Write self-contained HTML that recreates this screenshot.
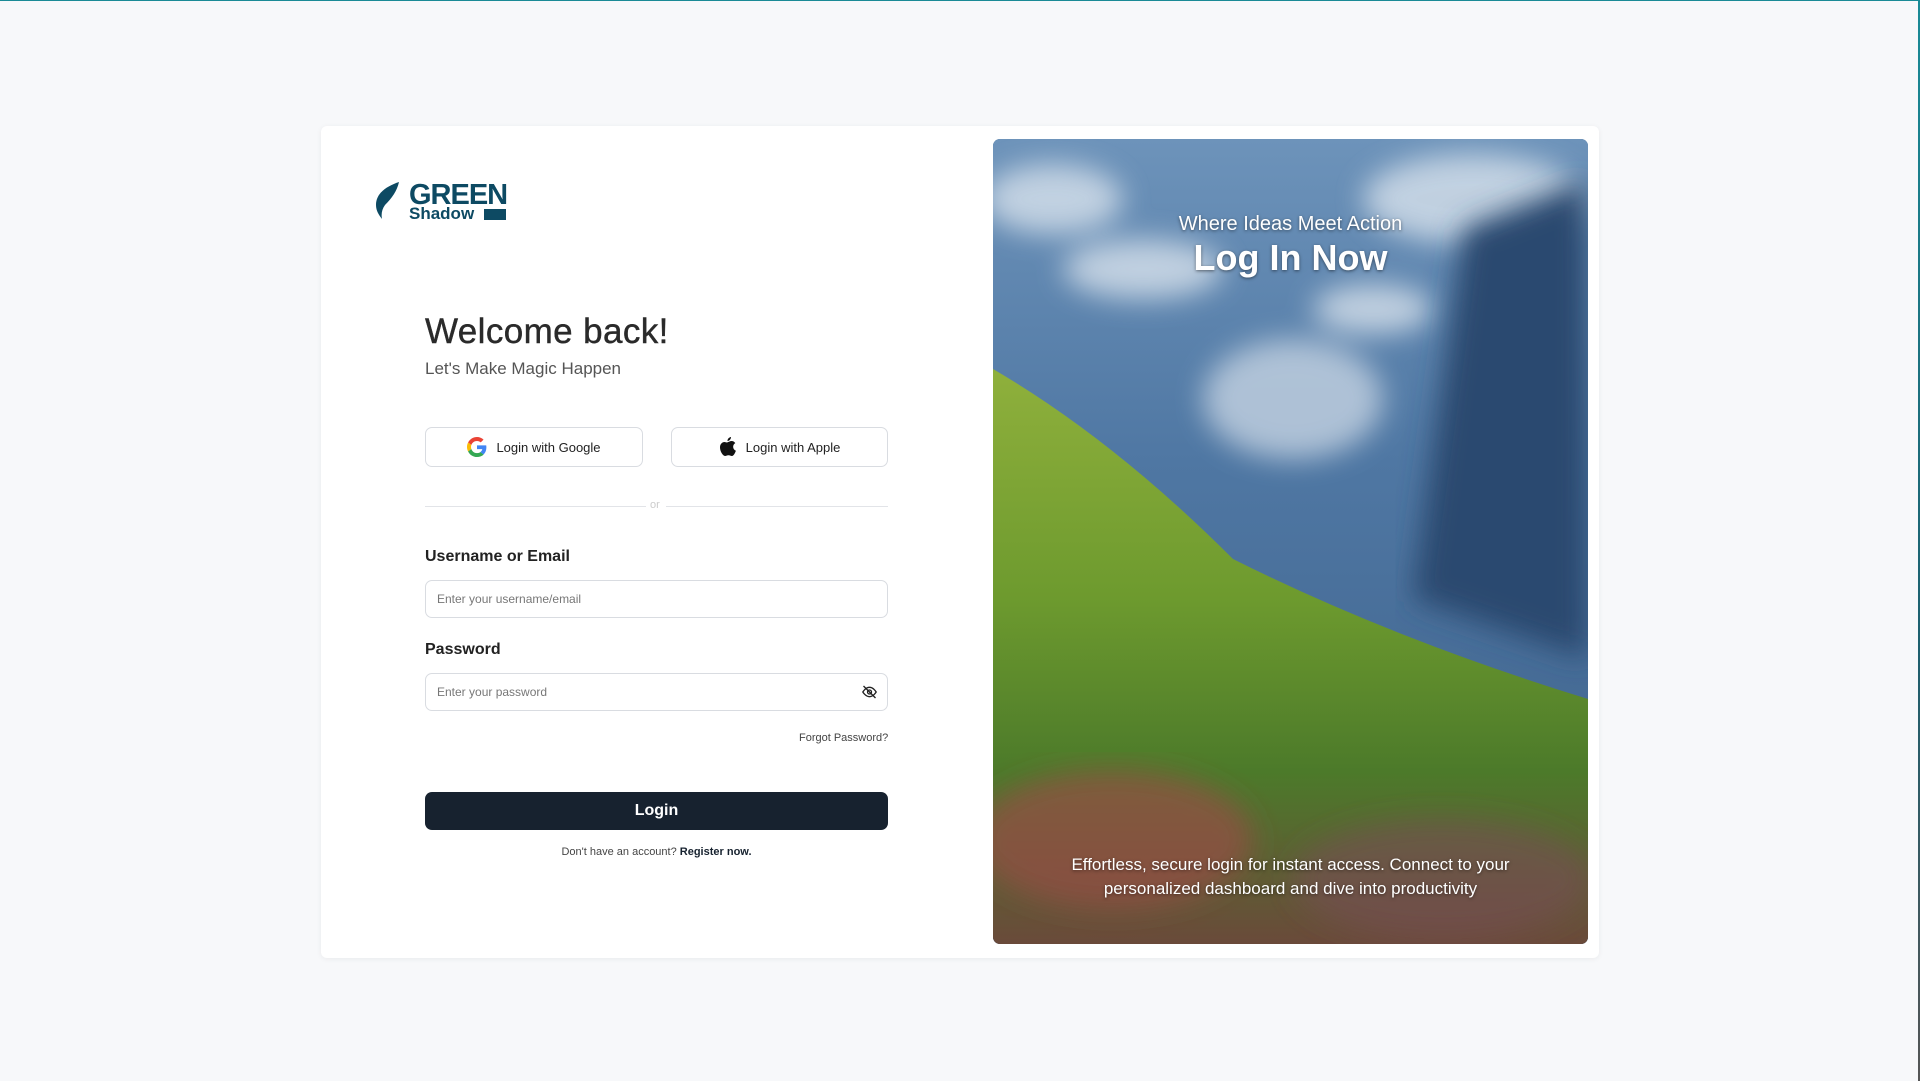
<!DOCTYPE html>
<html><head><meta charset="utf-8"><style>
*{box-sizing:border-box;margin:0;padding:0}
body{width:1920px;height:1080px;background:#f7f8fa;font-family:"Liberation Sans",sans-serif;position:relative;overflow:hidden;border-top:1px solid #1a8a96}
.edge{position:absolute;right:0;top:0;width:2px;height:1080px;background:linear-gradient(#1a8a96,#1d5f6e 60%,#555 100%)}
.card{position:absolute;left:321px;top:125px;width:1278px;height:832px;background:#fff;border-radius:6px;box-shadow:0 1px 6px rgba(0,0,0,.06)}
.abs{position:absolute}
.btn{position:absolute;height:40px;border:1px solid #d9dce1;border-radius:7px;display:flex;align-items:center;justify-content:center;font-size:13px;color:#222;gap:9px}
.inp{position:absolute;left:425px;width:463px;height:38px;border:1px solid #d9dce1;border-radius:7px;font-size:12px;color:#777;padding-left:11px;display:flex;align-items:center}
.lbl{position:absolute;left:425px;font-size:16px;font-weight:bold;color:#222}
.img{position:absolute;left:993px;top:138px;width:595px;height:805px;border-radius:7px;overflow:hidden;background:#4a6f98}
.img .w{position:absolute;left:0;width:100%;text-align:center;color:#fff;text-shadow:0 1px 3px rgba(0,0,0,.5)}
</style></head><body>
<div class="edge"></div>
<div class="card"></div>
<svg class="abs" style="left:373px;top:180px" width="30" height="40" viewBox="0 0 30 40"><path d="M26 1C14 5 3 12 3 24c0 6 3 10 6 14-1-5 0-10 3-14C19 17 24 10 26 1z" fill="#0d4a63"/></svg>
<div class="abs" style="left:409px;top:178px;font-size:29px;font-weight:bold;color:#0d4a63;letter-spacing:-1px">GREEN</div>
<div class="abs" style="left:409px;top:203px;font-size:17px;font-weight:bold;color:#0d4a63">Shadow</div>
<div class="abs" style="left:484px;top:208px;width:22px;height:11px;background:#0d4a63"></div>
<div class="abs" style="left:425px;top:311px;font-size:35px;color:#2a2a2a;letter-spacing:.4px;-webkit-text-stroke:.4px #2a2a2a">Welcome back!</div>
<div class="abs" style="left:425px;top:358px;font-size:17px;color:#555">Let's Make Magic Happen</div>
<div class="btn" style="left:425px;top:426px;width:218px"><svg width="20" height="20" viewBox="0 0 48 48"><path fill="#EA4335" d="M24 9.5c3.5 0 6.6 1.2 9 3.5l6.7-6.7C35.6 2.4 30.2 0 24 0 14.6 0 6.6 5.4 2.6 13.2l7.8 6C12.3 13.6 17.7 9.5 24 9.5z"/><path fill="#4285F4" d="M46.5 24.5c0-1.6-.1-3.1-.4-4.5H24v9h12.7c-.6 3-2.3 5.5-4.8 7.2l7.6 5.9c4.4-4.1 7-10.1 7-17.6z"/><path fill="#FBBC05" d="M10.4 28.7c-.5-1.4-.8-3-.8-4.7s.3-3.300.8-4.7l-7.8-6C.9 16.6 0 20.2 0 24s.9 7.4 2.6 10.7l7.8-6z"/><path fill="#34A853" d="M24 48c6.5 0 11.9-2.1 15.9-5.8l-7.6-5.9c-2.1 1.4-4.9 2.3-8.3 2.3-6.3 0-11.7-4.2-13.6-9.9l-7.8 6C6.6 42.6 14.6 48 24 48z"/></svg>Login with Google</div>
<div class="btn" style="left:671px;top:426px;width:217px"><svg width="18" height="20" viewBox="0 0 18 20"><path d="M12 0c0 2-1.5 4-3.5 4C8.4 2 10 .3 12 0zM9 5c1 0 2-1 3.5-1 1.5 0 3 .8 3.8 2.1-3.2 1.8-2.700 6.3.6 7.6-.7 2-2.2 5.300-4 5.300-1.300 0-1.700-.8-3.400-.8s-2.2.8-3.5.8C4 19 1 14.5 1 10.5 1 7 3.2 5 5.4 5 6.8 5 8 6 9 5z" fill="#111"/></svg>Login with Apple</div>
<div class="abs" style="left:425px;top:505px;width:221px;height:1px;background:#e2e4e8"></div>
<div class="abs" style="left:666px;top:505px;width:222px;height:1px;background:#e2e4e8"></div>
<div class="abs" style="left:650px;top:498px;font-size:11px;color:#ccc">or</div>
<div class="lbl" style="top:547px">Username or Email</div>
<div class="inp" style="top:579px">Enter your username/email</div>
<div class="lbl" style="top:640px">Password</div>
<div class="inp" style="top:672px">Enter your password</div>
<svg class="abs" style="left:861px;top:683px" width="17" height="16" viewBox="0 0 24 24" fill="none" stroke="#222" stroke-width="2"><path d="M2 12s4-7 10-7 10 7 10 7-4 7-10 7S2 12 2 12z"/><circle cx="12" cy="12" r="3"/><path d="M3 3l18 18"/></svg>
<div class="abs" style="left:799px;top:731px;font-size:11px;color:#444">Forgot Password?</div>
<div class="abs" style="left:425px;top:791px;width:463px;height:38px;background:#17222f;border-radius:7px;color:#fff;font-size:16px;font-weight:bold;display:flex;align-items:center;justify-content:center">Login</div>
<div class="abs" style="left:425px;top:845px;width:463px;text-align:center;font-size:11px;color:#444">Don't have an account? <b style="color:#17222f">Register now.</b></div>
<div class="img">
<svg width="595" height="805" viewBox="0 0 595 805" style="position:absolute;left:0;top:0">
<defs><linearGradient id="sky" x1="0" y1="0" x2="0" y2="1"><stop offset="0" stop-color="#6d93ba"/><stop offset=".4" stop-color="#4f77a3"/><stop offset="1" stop-color="#3c5f88"/></linearGradient>
<linearGradient id="mead" x1="0" y1="0" x2="0" y2="1"><stop offset="0" stop-color="#8fb03c"/><stop offset=".4" stop-color="#6d9a2e"/><stop offset=".7" stop-color="#4c7a2a"/><stop offset="1" stop-color="#6a4a3a"/></linearGradient>
<filter id="b"><feGaussianBlur stdDeviation="14"/></filter></defs>
<rect width="595" height="805" fill="url(#sky)"/>
<g filter="url(#b)" fill="#d8e2ec" opacity=".8"><ellipse cx="60" cy="60" rx="70" ry="35"/><ellipse cx="150" cy="130" rx="80" ry="30"/><ellipse cx="480" cy="60" rx="110" ry="45"/><ellipse cx="300" cy="260" rx="90" ry="60" fill="#c5d3e2"/><ellipse cx="380" cy="170" rx="60" ry="25"/></g>
<path d="M470 90 L595 40 L595 520 L420 460 Z" fill="#2c4a70" filter="url(#b)"/>
<path d="M0 230 Q120 300 240 420 Q400 500 595 560 L595 805 L0 805 Z" fill="url(#mead)"/>
<g filter="url(#b)"><ellipse cx="120" cy="700" rx="140" ry="70" fill="#a04848" opacity=".6"/><ellipse cx="450" cy="740" rx="150" ry="60" fill="#7a4a5a" opacity=".5"/></g>
</svg>
<div class="w" style="top:74px;font-size:20px">Where Ideas Meet Action</div>
<div class="w" style="top:98px;font-size:36px;font-weight:bold">Log In Now</div>
<div class="w" style="top:714px;font-size:17px;line-height:24px;padding:0 60px">Effortless, secure login for instant access. Connect to your personalized dashboard and dive into productivity</div>
</div>
</body></html>
